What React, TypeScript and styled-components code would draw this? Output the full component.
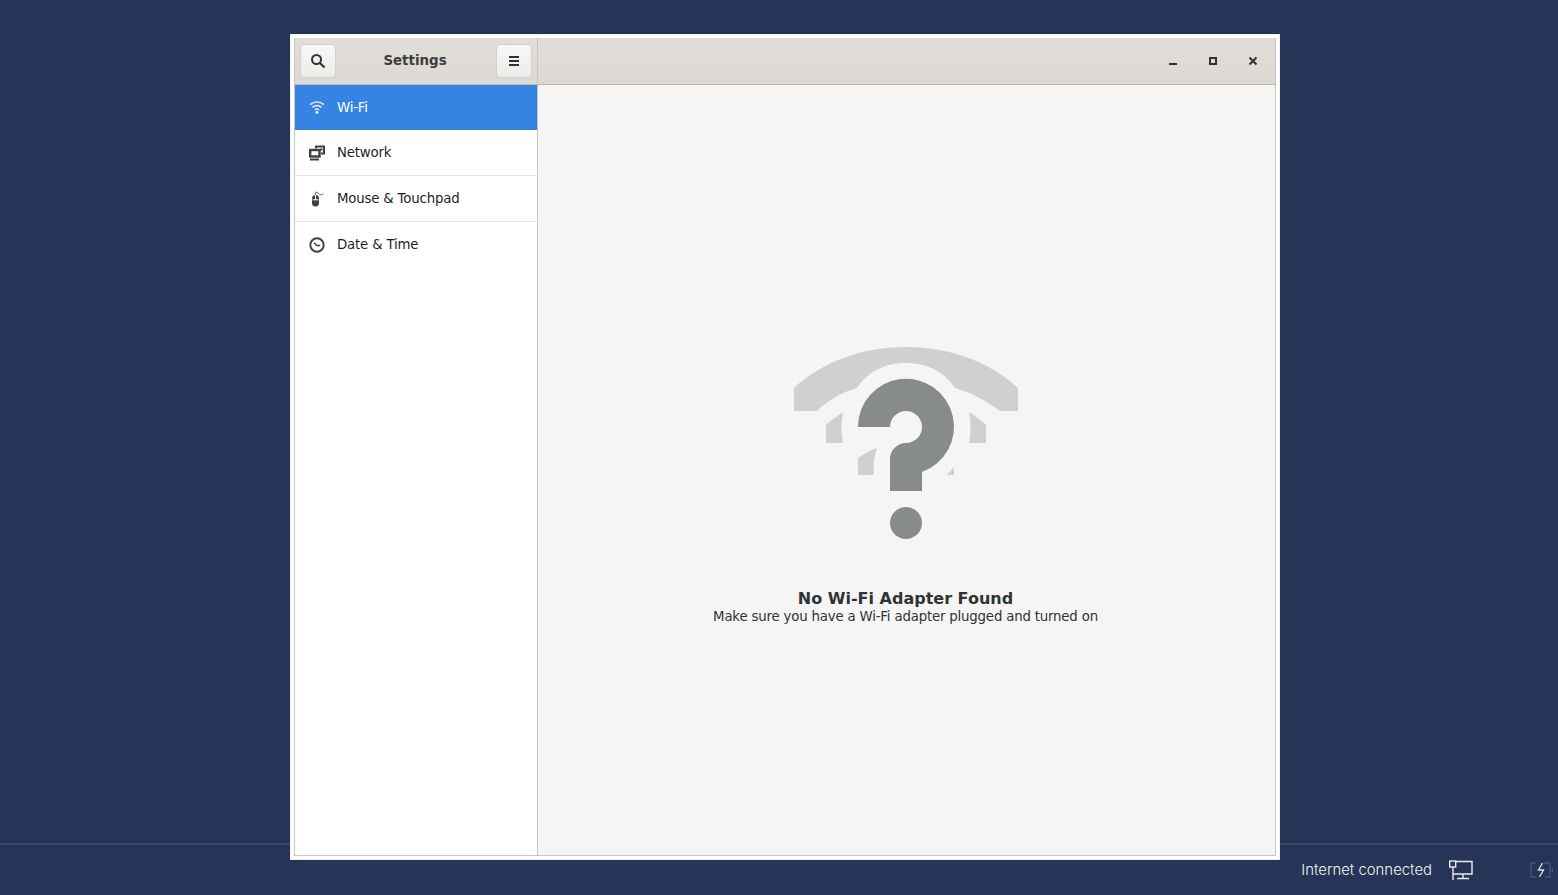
import React from 'react';
import styled, { createGlobalStyle } from 'styled-components';

const GlobalStyle = createGlobalStyle`
  html, body, #root { margin: 0; padding: 0; height: 100%; }
  body { background: #263557; overflow: hidden; font-family: "DejaVu Sans", sans-serif; }
`;

const Desktop = styled.div`
  position: relative;
  width: 1558px;
  height: 895px;
  display: flex;
  flex-direction: column;
  justify-content: flex-end;
  background: #263557;
`;

const Panel = styled.div`
  height: 50px;
  border-top: 2px solid #3a4767;
  display: flex;
  align-items: center;
  justify-content: flex-end;
  padding: 0 5px 0 0;
`;

const PanelLabel = styled.span`
  font-family: Inter, "Liberation Sans", sans-serif;
  font-size: 14.9px;
  font-weight: 300;
  color: #f0f1f5;
  margin-right: 17px;
`;

const PanelIcon = styled.svg<{ $gap?: number }>`
  display: block;
  margin-right: ${p => p.$gap ?? 0}px;
`;

const Win = styled.div`
  position: absolute;
  left: 290px;
  top: 34px;
  width: 990px;
  height: 826px;
  box-sizing: border-box;
  background: #fff;
  padding: 4px;
  display: flex;
  flex-direction: column;
  box-shadow: inset 0 0 0 1px #f4f2ef;
`;

const Frame = styled.div`
  flex: 1;
  display: flex;
  flex-direction: column;
  border: 1px solid #c9c5bf;
  border-top: none;
  min-height: 0;
`;

const TitleBar = styled.header`
  height: 47px;
  display: flex;
  box-sizing: border-box;
  border-bottom: 1px solid #bfb8b0;
  background: linear-gradient(#e1ded9, #dcd9d4);
`;

const TitleLeft = styled.div`
  width: 243px;
  box-sizing: border-box;
  border-right: 1px solid #c9c5bf;
  display: flex;
  align-items: center;
  justify-content: space-between;
  padding: 0 5px;
`;

const TitleText = styled.h1`
  margin: 0 2px 2px 0;
  font-size: 13.4px;
  font-weight: 700;
  color: #3d3d3d;
`;

const HeaderButton = styled.button`
  width: 36px;
  height: 34px;
  padding: 0;
  border: 1px solid #d4cfc9;
  border-radius: 4px;
  background: linear-gradient(#f8f7f6, #eeecea);
  display: flex;
  align-items: center;
  justify-content: center;
`;

const TitleRight = styled.div`
  flex: 1;
  display: flex;
  align-items: center;
  justify-content: flex-end;
  gap: 24px;
  padding-right: 14px;
`;

const WinControl = styled.div`
  width: 16px;
  height: 16px;
  display: flex;
  align-items: center;
  justify-content: center;
`;

const Body = styled.div`
  flex: 1;
  display: flex;
  min-height: 0;
`;

const Sidebar = styled.nav`
  width: 243px;
  box-sizing: border-box;
  background: #fff;
  border-right: 1px solid #c9c5bf;
`;

const Row = styled.div<{ $active?: boolean }>`
  height: 46px;
  box-sizing: border-box;
  display: flex;
  align-items: center;
  gap: 12px;
  padding-left: 14px;
  font-size: 13.33px;
  letter-spacing: -0.19px;
  color: ${p => (p.$active ? '#fff' : '#1f1f1f')};
  background: ${p => (p.$active ? '#3584e4' : '#fff')};
  border-bottom: 1px solid ${p => (p.$active ? '#3584e4' : '#e6e4e2')};
  &:first-child { height: 45px; }
  &:last-child { height: 45px; border-bottom: none; }
`;

const RowIcon = styled.svg`
  display: block;
  flex: none;
`;

const Content = styled.main`
  flex: 1;
  background: #f6f5f4;
  display: flex;
  flex-direction: column;
  align-items: center;
  padding: 262px 2px 0 0;
  color: #2e3436;
`;

const Placeholder = styled.svg`
  display: block;
  margin-bottom: 50px;
`;

const Heading = styled.h2`
  margin: 0;
  font-size: 16px;
  font-weight: 700;
  line-height: 19px;
`;

const Hint = styled.p`
  margin: 0;
  font-size: 13.33px;
  letter-spacing: -0.19px;
  line-height: 17px;
`;

const ink = '#3d4144';

const items = [
  {
    label: 'Wi-Fi',
    active: true,
    icon: (
      <g fill="none" stroke="#dbe9fb" strokeWidth="1.700">
        <path d="M1.200 5.600C3.100 3.900 5.400 3 8 3s4.900.9 6.800 2.600" />
        <path d="M3.600 8.300C4.800 7.200 6.300 6.600 8 6.600s3.200.6 4.400 1.700" />
        <path d="M5.900 10.800c.6-.5 1.300-.8 2.100-.8s1.500.3 2.100.8" />
        <circle cx="8" cy="13.300" r="1.600" fill="#dbe9fb" stroke="none" />
      </g>
    ),
  },
  {
    label: 'Network',
    icon: (
      <g fill="none" stroke={ink} strokeWidth="2">
        <path d="M7 3.500V1.500h8v7h-3" />
        <rect x="1.200" y="5" width="9.300" height="6.500" strokeWidth="2.400" />
        <path d="M1 14.500h9" />
        <path d="M11 4.500h2.500" />
      </g>
    ),
  },
  {
    label: 'Mouse & Touchpad',
    icon: (
      <g>
        <path d="M3 7.500a3.500 3.500 0 0 1 7 0v4.500a3.500 3.500 0 0 1-7 0z" fill={ink} />
        <path d="M6 4v5h1V4z" fill="#fff" />
        <path d="M3.500 8.800h6" stroke="#fff" />
        <path d="M6.500 3.800V2.200c0-1.400 2.200-1.400 2.800 0 .7 1.700 3.200 2.300 5.200.4" fill="none" stroke={ink} strokeOpacity=".85" />
      </g>
    ),
  },
  {
    label: 'Date & Time',
    icon: (
      <g fill="none" stroke={ink}>
        <circle cx="8" cy="8" r="6.700" strokeWidth="1.900" />
        <path d="M5 5.800l2.800 2.700h3.400" strokeWidth="1.300" />
      </g>
    ),
  },
];

export default function App() {
  return (
    <Desktop>
      <GlobalStyle />
      <Panel>
        <PanelLabel>Internet connected</PanelLabel>
        <PanelIcon width="24" height="20" viewBox="0 0 24 20" fill="none" stroke="#e8eaef" strokeWidth="1.400" $gap={57}>
          <path d="M7 1.500h16v12.500H4M4 7v13" />
          <rect x=".7" y="1" width="6" height="6" />
          <path d="M14 14v4.500M8 18.500h12" />
        </PanelIcon>
        <PanelIcon width="23" height="16" viewBox="0 0 23 16" fill="none" stroke="#46557a" strokeWidth="1.300">
          <path d="M6 1H1v14h5M14 1h6v14h-5M22.500 6v4" />
          <path d="M12.500 1 8.500 8h5l-4 7" stroke="#dfe2e9" />
        </PanelIcon>
      </Panel>
      <Win>
        <Frame>
          <TitleBar>
            <TitleLeft>
              <HeaderButton aria-label="Search">
                <svg width="16" height="16" viewBox="0 0 16 16" fill="none" stroke="#2e3436">
                  <circle cx="6.500" cy="6.500" r="4.500" strokeWidth="2" />
                  <path d="M10 10l4.500 4.500" strokeWidth="2.200" />
                </svg>
              </HeaderButton>
              <TitleText>Settings</TitleText>
              <HeaderButton aria-label="Menu">
                <svg width="16" height="16" viewBox="0 0 16 16" fill="#2e3436">
                  <path d="M3 3h10v2H3zM3 7h10v2H3zM3 11h10v2H3z" />
                </svg>
              </HeaderButton>
            </TitleLeft>
            <TitleRight>
              <WinControl>
                <svg width="16" height="16" viewBox="0 0 16 16" fill="#2e3436"><path d="M4 10h8v2H4z" /></svg>
              </WinControl>
              <WinControl>
                <svg width="16" height="16" viewBox="0 0 16 16" fill="none" stroke="#2e3436" strokeWidth="2"><rect x="5" y="5" width="6" height="6" /></svg>
              </WinControl>
              <WinControl>
                <svg width="16" height="16" viewBox="0 0 16 16" fill="none" stroke="#2e3436" strokeWidth="2"><path d="M4.500 4.500l7 7M11.500 4.500l-7 7" /></svg>
              </WinControl>
            </TitleRight>
          </TitleBar>
          <Body>
            <Sidebar>
              {items.map(item => (
                <Row key={item.label} $active={item.active}>
                  <RowIcon width="16" height="16" viewBox="0 0 16 16">{item.icon}</RowIcon>
                  {item.label}
                </Row>
              ))}
            </Sidebar>
            <Content>
              <Placeholder width="224" height="192" viewBox="0 0 224 192">
                <g fill="#d0d1cf">
                  <path d="M0 41C28 15 68 0 112 0s84 15 112 41v23h-18c-13-10-28-18-45-23-11-17-29-25-49-25s-38 8-49 25c-17 5-30 13-40 23H0z" />
                  <path d="M32 96V78c5-5 11-9 17-13-2 10-2 21 0 31z" />
                  <path d="M192 96V78c-5-5-11-9-17-13 2 10 2 21 0 31z" />
                  <path d="M64 128v-17c6-4 12-8 19-10-3 9-4 19-3 27z" />
                  <path d="M153 128l7-8v8z" />
                </g>
                <g fill="#888b8b">
                  <path d="M64 80a48 48 0 1 1 64 45v19H96v-32a16 16 0 0 1 16-16 16 16 0 1 0-16-16z" />
                  <circle cx="112" cy="176" r="16" />
                </g>
              </Placeholder>
              <Heading>No Wi-Fi Adapter Found</Heading>
              <Hint>Make sure you have a Wi-Fi adapter plugged and turned on</Hint>
            </Content>
          </Body>
        </Frame>
      </Win>
    </Desktop>
  );
}
